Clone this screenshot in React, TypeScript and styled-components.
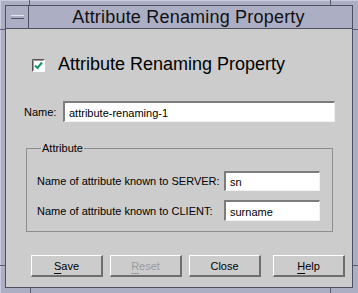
import React from "react";
import styled, { createGlobalStyle } from "styled-components";

const GlobalStyle = createGlobalStyle`
  html, body {
    margin: 0;
    padding: 0;
    background: #acaec4;
  }
  body {
    font-family: "Liberation Sans", Arial, sans-serif;
  }
`;

// Window frame (Motif/CDE style)
const Frame = styled.div`
  position: relative;
  box-sizing: border-box;
  width: 358px;
  height: 293px;
  padding: 4px 5px 5px 4px;
  background: #acaec4;
  border-top: 1px solid #c9cbdc;
  border-left: 1px solid #c9cbdc;
  display: flex;
`;

const Tick = styled.div<{ $v?: boolean }>`
  position: absolute;
  background: #5c5e70;
  width: ${(p) => (p.$v ? "1px" : "5px")};
  height: ${(p) => (p.$v ? "5px" : "1px")};
`;

const Inner = styled.div`
  flex: 1;
  display: flex;
  flex-direction: column;
  border: 1px solid #4e5062;
  background: #cccccc;
`;

const TitleBar = styled.div`
  display: flex;
  height: 22px;
  background: #acaec4;
  border-bottom: 1px solid #4e5062;
`;

const MenuButton = styled.div`
  width: 22px;
  display: flex;
  align-items: center;
  justify-content: center;
  border-right: 1px solid #4e5062;
`;

const MenuBar = styled.div`
  width: 13px;
  height: 2px;
  border-top: 1px solid #e4e5ee;
  border-bottom: 1px solid #4e5062;
  background: #acaec4;
`;

const Title = styled.div`
  flex: 1;
  display: flex;
  align-items: center;
  justify-content: center;
  font-size: 18px;
  letter-spacing: 0.2px;
  color: #111;
  padding-right: 4px;
`;

const Content = styled.div`
  flex: 1;
  display: flex;
  flex-direction: column;
  font-size: 11px;
  color: #000;
`;

const CheckRow = styled.label`
  display: flex;
  align-items: center;
  gap: 13px;
  height: 20px;
  margin-top: 25px;
  padding-left: 26px;
  font-size: 18px;
`;

const CheckBox = styled.svg`
  margin-top: 2px;
  flex: none;
`;

const NameRow = styled.div`
  display: flex;
  align-items: center;
  margin-top: 27px;
  padding-left: 18px;
`;

const Label = styled.span<{ $w: number }>`
  width: ${(p) => p.$w}px;
  flex: none;
`;

const TextField = styled.input<{ $w: number; $h?: number }>`
  box-sizing: border-box;
  width: ${(p) => p.$w}px;
  height: ${(p) => p.$h ?? 21}px;
  margin: 0;
  padding: 1px 4px 0;
  font: 11px "Liberation Sans", Arial, sans-serif;
  color: #000;
  background: #fff;
  border-top: 2px solid #7c7c7c;
  border-left: 2px solid #7c7c7c;
  border-right: 1px solid #f2f2f2;
  border-bottom: 1px solid #f2f2f2;
  outline: none;
`;

const Group = styled.fieldset`
  box-sizing: border-box;
  width: 307px;
  margin: 19px 0 0 20px;
  padding: 16px 11px 10px 10px;
  border: 1px solid #8e8e8e;
  display: flex;
  flex-direction: column;
  gap: 9px;
`;

const Legend = styled.legend`
  font-size: 11px;
  line-height: 14px;
  padding: 0 1px;
  margin-left: 4px;
`;

const FieldRow = styled.div`
  display: flex;
  align-items: center;
`;

const ButtonRow = styled.div`
  display: flex;
  gap: 7px;
  margin-top: 23px;
  padding-left: 25px;
`;

const Button = styled.button<{ $push?: boolean }>`
  box-sizing: border-box;
  width: 72px;
  height: 22px;
  margin: 0 0 0 ${(p) => (p.$push ? 5 : 0)}px;
  padding: 0;
  background: #cccccc;
  font: 11px "Liberation Sans", Arial, sans-serif;
  color: ${(p) => (p.disabled ? "#9a9a9a" : "#000")};
  border-top: 1px solid #ffffff;
  border-left: 1px solid #ffffff;
  border-right: 2px solid #6e6e6e;
  border-bottom: 2px solid #6e6e6e;
`;

const Mnemonic = styled.span`
  text-decoration: underline;
  text-decoration-thickness: 1px;
  text-underline-offset: 3px;
`;

const ticks: { x: number; y: number; v?: boolean }[] = [
  { x: 28, y: -1, v: true },
  { x: 329, y: -1, v: true },
  { x: 29, y: 287, v: true },
  { x: 329, y: 287, v: true },
  { x: -1, y: 28 },
  { x: -1, y: 264 },
  { x: 352, y: 28 },
  { x: 352, y: 264 },
];

export default function App() {
  return (
    <>
      <GlobalStyle />
      <Frame>
        {ticks.map((t, i) => (
          <Tick key={i} $v={t.v} style={{ left: t.x, top: t.y }} />
        ))}
        <Inner>
          <TitleBar>
            <MenuButton>
              <MenuBar />
            </MenuButton>
            <Title>Attribute Renaming Property</Title>
          </TitleBar>
          <Content>
            <CheckRow>
              <CheckBox width="13" height="13" viewBox="0 0 13 13">
                <rect x="0" y="0" width="13" height="13" fill="#ffffff" />
                <path d="M0.5 12.5V0.5H12.5" fill="none" stroke="#555" strokeWidth="1" />
                <path d="M1.5 11.5V1.5H11.5" fill="none" stroke="#9a9a9a" strokeWidth="1" />
                <path d="M3 6.5L5.5 9L10 3.5" fill="none" stroke="#14956a" strokeWidth="2" />
              </CheckBox>
              Attribute Renaming Property
            </CheckRow>

            <NameRow>
              <Label $w={39}>Name:</Label>
              <TextField $w={272} defaultValue="attribute-renaming-1" />
            </NameRow>

            <Group>
              <Legend>Attribute</Legend>
              <FieldRow>
                <Label $w={187}>Name of attribute known to SERVER:</Label>
                <TextField $w={96} $h={20} defaultValue="sn" />
              </FieldRow>
              <FieldRow>
                <Label $w={187}>Name of attribute known to CLIENT:</Label>
                <TextField $w={96} $h={21} defaultValue="surname" />
              </FieldRow>
            </Group>

            <ButtonRow>
              <Button><Mnemonic>S</Mnemonic>ave</Button>
              <Button disabled><Mnemonic>R</Mnemonic>eset</Button>
              <Button>Close</Button>
              <Button $push><Mnemonic>H</Mnemonic>elp</Button>
            </ButtonRow>
          </Content>
        </Inner>
      </Frame>
    </>
  );
}
